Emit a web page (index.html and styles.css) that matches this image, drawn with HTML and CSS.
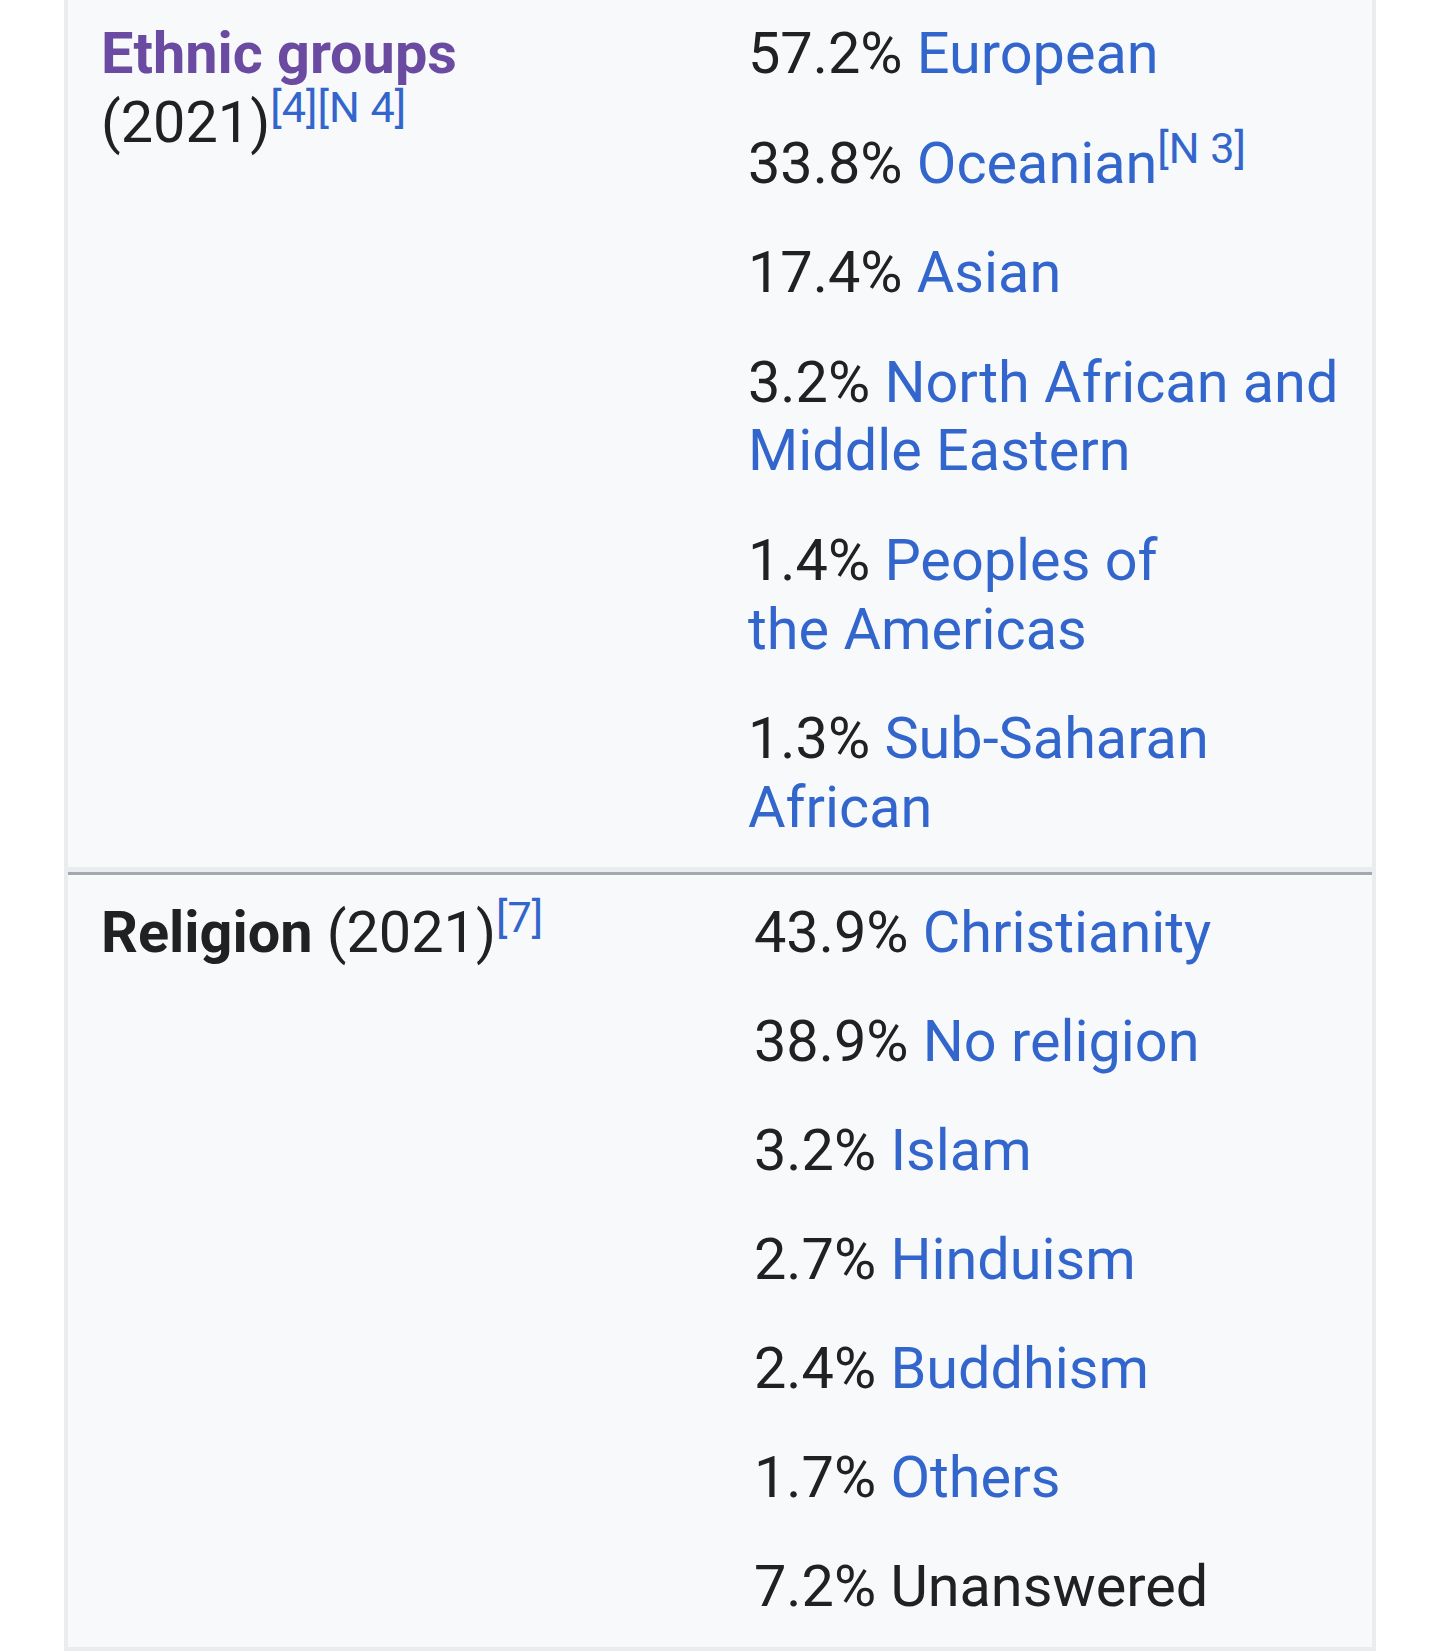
FILE: index.html
```html
<!DOCTYPE html>
<html lang="en">
<head>
<meta charset="utf-8">
<title>Infobox demographics</title>
<link rel="stylesheet" href="styles.css">
</head>
<body>
<div class="infobox">
  <div class="row">
    <div class="label"><a class="visited">Ethnic groups</a><br><span class="year">(2021)</span><sup><a>[4]</a><a>[N 4]</a></sup></div>
    <ul class="values">
      <li>57.2% <a>European</a></li>
      <li>33.8% <a>Oceanian</a><sup><a>[N 3]</a></sup></li>
      <li>17.4% <a>Asian</a></li>
      <li>3.2% <a>North African and Middle Eastern</a></li>
      <li>1.4% <a>Peoples of<br>the Americas</a></li>
      <li>1.3% <a>Sub-Saharan African</a></li>
    </ul>
  </div>
  <div class="row row-religion">
    <div class="label"><span class="plain">Religion</span> <span class="year">(2021)</span><sup><a>[7]</a></sup></div>
    <ul class="values">
      <li>43.9% <a>Christianity</a></li>
      <li>38.9% <a>No religion</a></li>
      <li>3.2% <a>Islam</a></li>
      <li>2.7% <a>Hinduism</a></li>
      <li>2.4% <a>Buddhism</a></li>
      <li>1.7% <a>Others</a></li>
      <li>7.2% Unanswered</li>
    </ul>
  </div>
</div>
</body>
</html>
```

FILE: styles.css
```css
html, body {
  margin: 0;
  padding: 0;
  background: #ffffff;
}

body {
  font-family: Roboto, "Noto Sans", "Liberation Sans", sans-serif;
  font-size: 57.6px;
  line-height: 68.6px;
  color: #202122;
}

a {
  color: #3366cc;
  text-decoration: none;
}

.infobox {
  margin-left: 64px;
  width: 1304px;
  border-left: 4px solid #eaecf0;
  border-right: 4px solid #eaecf0;
  background: #f8f9fa;
}

.row {
  display: grid;
  grid-template-columns: 647px 1fr;
  padding: 20px 0 30px 33px;
  border-bottom: 3px solid #a2a9b1;
  box-shadow: inset 0 -5px 0 #eaecf0;
}

.row-religion {
  padding-top: 23.5px;
}

.label {
  font-weight: 400;
}

.label .visited {
  color: #6b4ba1;
  font-weight: 700;
}

.label .plain {
  font-weight: 700;
}

sup {
  font-size: 75%;
  line-height: 0;
  vertical-align: super;
  font-weight: 400;
}

.values {
  list-style: none;
  margin: 0;
  padding: 0;
}

.values li {
  margin: 0 0 41px 0;
}

.values li:last-child {
  margin-bottom: 0;
}

.row-religion .values {
  padding-left: 6px;
}

.row-religion .values li {
  margin-bottom: 40.5px;
}

.row-religion .values li:last-child {
  margin-bottom: 0;
}
```
